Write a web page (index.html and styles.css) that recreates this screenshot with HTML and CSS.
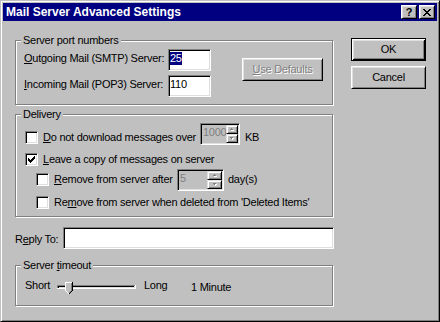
FILE: index.html
```html
<!DOCTYPE html>
<html lang="en">
<head>
<meta charset="utf-8">
<title>Mail Server Advanced Settings</title>
<link rel="stylesheet" href="styles.css">
</head>
<body>
<div class="window">
  <div class="titlebar">
    <span class="title">Mail Server Advanced Settings</span>
    <div class="caption-buttons">
      <button class="cap-btn help" type="button">?</button>
      <button class="cap-btn close" type="button" aria-label="Close">
        <svg width="8" height="7" viewBox="0 0 8 7" shape-rendering="crispEdges"><path fill="#000" d="M0 0h2v1H0zM6 0h2v1H6zM1 1h2v1H1zM5 1h2v1H5zM2 2h4v1H2zM3 3h2v1H3zM2 4h4v1H2zM1 5h2v1H1zM5 5h2v1H5zM0 6h2v1H0zM6 6h2v1H6z"/></svg>
      </button>
    </div>
  </div>
  <div class="client">
    <div class="left">
      <div class="group ports">
        <div class="legend">Server port numbers</div>
        <div class="ports-grid">
          <span class="field-label r1"><u>O</u>utgoing Mail (SMTP) Server:</span>
          <div class="edit port r1"><span class="text"><span class="sel">25</span></span></div>
          <button class="btn defaults" type="button" disabled><span><u>U</u>se Defaults</span></button>
          <span class="field-label r2"><u>I</u>ncoming Mail (POP3) Server:</span>
          <div class="edit port r2"><span class="text">110</span></div>
        </div>
      </div>

      <div class="group delivery">
        <div class="legend">Delivery</div>
        <div class="opt-row limit">
          <div class="check"><span class="cb"></span><span><u>D</u>o not download messages over</span></div>
          <div class="edit disabled kb-edit">
            <span class="text">1000</span>
            <div class="spin">
              <span class="spin-btn"><svg width="4" height="3" viewBox="0 0 4 3" shape-rendering="crispEdges"><path fill="#fff" d="M2 1h1v1H2zM1 2h3v1H1z"/><path fill="#808080" d="M1 0h1v1H1zM0 1h3v1H0z"/></svg></span>
              <span class="spin-btn"><svg width="4" height="3" viewBox="0 0 4 3" shape-rendering="crispEdges"><path fill="#fff" d="M1 1h3v1H1zM2 2h1v1H2z"/><path fill="#808080" d="M0 0h3v1H0zM1 1h1v1H1z"/></svg></span>
            </div>
          </div>
          <span class="unit">KB</span>
        </div>
        <div class="check leave"><span class="cb"><svg width="7" height="7" viewBox="0 0 7 7" shape-rendering="crispEdges"><path fill="#000" d="M0 2h1v3H0zM1 3h1v3H1zM2 4h1v3H2zM3 3h1v3H3zM4 2h1v3H4zM5 1h1v3H5zM6 0h1v3H6z"/></svg></span><span><u>L</u>eave a copy of messages on server</span></div>
        <div class="opt-row after">
          <div class="check"><span class="cb"></span><span><u>R</u>emove from server after</span></div>
          <div class="edit disabled days-edit">
            <span class="text">5</span>
            <div class="spin">
              <span class="spin-btn"><svg width="4" height="3" viewBox="0 0 4 3" shape-rendering="crispEdges"><path fill="#fff" d="M2 1h1v1H2zM1 2h3v1H1z"/><path fill="#808080" d="M1 0h1v1H1zM0 1h3v1H0z"/></svg></span>
              <span class="spin-btn"><svg width="4" height="3" viewBox="0 0 4 3" shape-rendering="crispEdges"><path fill="#fff" d="M1 1h3v1H1zM2 2h1v1H2z"/><path fill="#808080" d="M0 0h3v1H0zM1 1h1v1H1z"/></svg></span>
            </div>
          </div>
          <span class="unit">day(s)</span>
        </div>
        <div class="check deleted"><span class="cb"></span><span>Re<u>m</u>ove from server when deleted from 'Deleted Items'</span></div>
      </div>

      <div class="reply">
        <span class="reply-label">R<u>e</u>ply To:</span>
        <div class="edit reply-field"><span class="text"></span></div>
      </div>

      <div class="group timeout">
        <div class="legend">Server <u>t</u>imeout</div>
        <div class="timeout-row">
          <span class="t-short">Short</span>
          <svg class="slider" width="79" height="12" viewBox="0 0 79 12" shape-rendering="crispEdges">
            <rect x="0" y="3" width="78" height="1" fill="#808080"/>
            <rect x="0" y="4" width="1" height="2" fill="#808080"/>
            <rect x="1" y="4" width="76" height="1" fill="#000"/>
            <rect x="1" y="5" width="1" height="1" fill="#000"/>
            <rect x="2" y="5" width="75" height="1" fill="#dfdfdf"/>
            <rect x="77" y="4" width="1" height="2" fill="#dfdfdf"/>
            <rect x="0" y="6" width="79" height="1" fill="#fff"/>
            <rect x="78" y="3" width="1" height="4" fill="#fff"/>
            <g transform="translate(8 0)">
              <rect x="1" y="1" width="5" height="8" fill="#c0c0c0"/>
              <rect x="2" y="9" width="3" height="1" fill="#c0c0c0"/>
              <rect x="3" y="10" width="1" height="1" fill="#c0c0c0"/>
              <rect x="0" y="0" width="7" height="1" fill="#fff"/>
              <rect x="0" y="1" width="1" height="8" fill="#fff"/>
              <rect x="1" y="9" width="1" height="1" fill="#fff"/>
              <rect x="2" y="10" width="1" height="1" fill="#fff"/>
              <rect x="3" y="11" width="1" height="1" fill="#fff"/>
              <rect x="6" y="1" width="1" height="8" fill="#808080"/>
              <rect x="5" y="9" width="1" height="1" fill="#808080"/>
              <rect x="4" y="10" width="1" height="1" fill="#808080"/>
              <rect x="7" y="0" width="1" height="9" fill="#000"/>
              <rect x="6" y="9" width="1" height="1" fill="#000"/>
              <rect x="5" y="10" width="1" height="1" fill="#000"/>
              <rect x="4" y="11" width="1" height="1" fill="#000"/>
            </g>
          </svg>
          <span class="t-long">Long</span>
          <span class="t-value">1 Minute</span>
        </div>
      </div>
    </div>

    <div class="right">
      <button class="btn default" type="button">OK</button>
      <button class="btn" type="button">Cancel</button>
    </div>
  </div>
</div>
</body>
</html>
```

FILE: styles.css
```css
* { box-sizing: border-box; }

html, body { margin: 0; padding: 0; }

body {
  width: 440px;
  height: 322px;
  overflow: hidden;
  background: #c0c0c0;
  color: #000;
  font-family: "Liberation Sans", Arial, sans-serif;
  font-size: 11px;
  line-height: 13px;
  letter-spacing: -0.25px;
}

button {
  font: inherit;
  letter-spacing: inherit;
  color: inherit;
  margin: 0;
  padding: 0;
}

u { text-decoration: underline; text-underline-offset: 1px; }

/* window frame */
.window {
  width: 440px;
  height: 322px;
  display: flex;
  flex-direction: column;
  padding: 2px;
  background: #c0c0c0;
  border: 1px solid;
  border-color: #c0c0c0 #000 #000 #c0c0c0;
  box-shadow: inset 1px 1px #fff, inset -1px -1px #808080;
}

.titlebar {
  flex: none;
  height: 18px;
  display: flex;
  justify-content: space-between;
  align-items: flex-start;
  padding: 0 2px 0 3px;
  background: #000080;
  color: #fff;
}

.title {
  font-size: 12px;
  font-weight: bold;
  line-height: 18px;
  letter-spacing: 0;
  white-space: nowrap;
}

.caption-buttons { display: flex; gap: 2px; margin-top: 2px; }

.cap-btn {
  width: 16px;
  height: 14px;
  display: flex;
  align-items: center;
  justify-content: center;
  background: #c0c0c0;
  color: #000;
  border: 1px solid;
  border-color: #fff #000 #000 #fff;
  box-shadow: inset 1px 1px #dfdfdf, inset -1px -1px #808080;
}

.cap-btn.help {
  font-weight: bold;
  font-size: 11px;
  line-height: 12px;
  letter-spacing: 0;
}

.cap-btn.close svg { margin-left: -1px; }

/* client area */
.client { flex: 1; display: flex; padding: 0 11px 0 12px; }

.left {
  width: 319px;
  padding-top: 19px;
  display: flex;
  flex-direction: column;
}

.right {
  margin-left: 17px;
  padding-top: 17px;
  display: flex;
  flex-direction: column;
  gap: 5px;
}

/* group boxes */
.group {
  width: 318px;
  border: 1px solid #808080;
  box-shadow: inset 1px 1px #fff, 1px 1px #fff;
}

.legend {
  width: max-content;
  margin: -7px 0 0 5px;
  padding: 0 2px;
  background: #c0c0c0;
}

/* buttons */
.btn {
  width: 75px;
  height: 23px;
  display: flex;
  align-items: center;
  justify-content: center;
  background: #c0c0c0;
  border: 1px solid;
  border-color: #fff #000 #000 #fff;
  box-shadow: inset 1px 1px #dfdfdf, inset -1px -1px #808080;
}

.btn.default {
  border-color: #000;
  box-shadow: inset 1px 1px #fff, inset -1px -1px #000, inset 2px 2px #dfdfdf, inset -2px -2px #808080;
}

.btn:disabled {
  color: #808080;
  text-shadow: 1px 1px 0 #fff;
}

/* edits */
.edit {
  height: 22px;
  display: flex;
  align-items: flex-start;
  padding: 1px;
  background: #fff;
  border: 1px solid;
  border-color: #808080 #fff #fff #808080;
  box-shadow: inset 1px 1px #000, inset -1px -1px #dfdfdf;
  white-space: nowrap;
}

.edit .text { padding: 1px 0 0 0; }

.edit.disabled { background: #c0c0c0; color: #808080; }
.edit.disabled .text { padding-left: 1px; }

.sel {
  display: inline-block;
  background: #000080;
  color: #fff;
  line-height: 13px;
}

.spin {
  margin-left: auto;
  width: 15px;
  display: flex;
  flex-direction: column;
}

.spin-btn {
  height: 9px;
  display: flex;
  align-items: center;
  justify-content: center;
  background: #c0c0c0;
  border: 1px solid;
  border-color: #dfdfdf #000 #000 #dfdfdf;
  box-shadow: inset 1px 1px #fff, inset -1px -1px #808080;
}

/* server ports */
.ports { height: 65px; }

.ports-grid {
  display: grid;
  grid-template-columns: 144px 43px auto;
  grid-template-rows: 22px 22px;
  row-gap: 4px;
  margin: 2px 0 0 8px;
}

.field-label {
  grid-column: 1;
  align-self: start;
  margin-top: 3px;
  white-space: nowrap;
}

.field-label.r1, .edit.r1 { grid-row: 1; }
.field-label.r2, .edit.r2 { grid-row: 2; }

.port { grid-column: 2; width: 43px; }

.btn.defaults {
  grid-column: 3;
  grid-row: 1 / 3;
  align-self: start;
  width: 81px;
  margin: 9px 0 0 31px;
}

/* delivery */
.delivery { height: 103px; margin-top: 9px; }

.opt-row { display: flex; align-items: flex-start; }

.check {
  display: flex;
  align-items: center;
  gap: 5px;
  height: 13px;
  white-space: nowrap;
}

.cb {
  flex: none;
  width: 13px;
  height: 13px;
  display: flex;
  align-items: center;
  justify-content: center;
  background: #fff;
  border: 1px solid;
  border-color: #808080 #fff #fff #808080;
  box-shadow: inset 1px 1px #000, inset -1px -1px #dfdfdf;
}

.limit { margin: 2px 0 0 9px; }
.limit .check { width: 175px; margin-top: 8px; }
.limit .unit { margin: 8px 0 0 5px; }
.kb-edit { width: 40px; }

.leave { margin: 8px 0 0 9px; }

.after { margin: 3px 0 0 20px; }
.after .check { width: 141px; margin-top: 4px; }
.after .unit { margin: 4px 0 0 4px; }
.days-edit { width: 47px; }

.deleted { margin: 5px 0 0 20px; }

/* reply to */
.reply { display: flex; align-items: flex-start; margin-top: 10px; }
.reply-label { width: 48px; margin-top: 6px; white-space: nowrap; }
.reply-field { width: 271px; }

/* timeout */
.timeout { height: 41px; margin-top: 16px; }

.timeout-row {
  display: flex;
  align-items: flex-start;
  margin: 7px 0 0 9px;
  white-space: nowrap;
}

.t-short { width: 32px; }
.slider { display: block; margin-top: 3px; }
.t-long { width: 47px; margin-left: 8px; }
.t-value { margin-top: 2px; }
```
